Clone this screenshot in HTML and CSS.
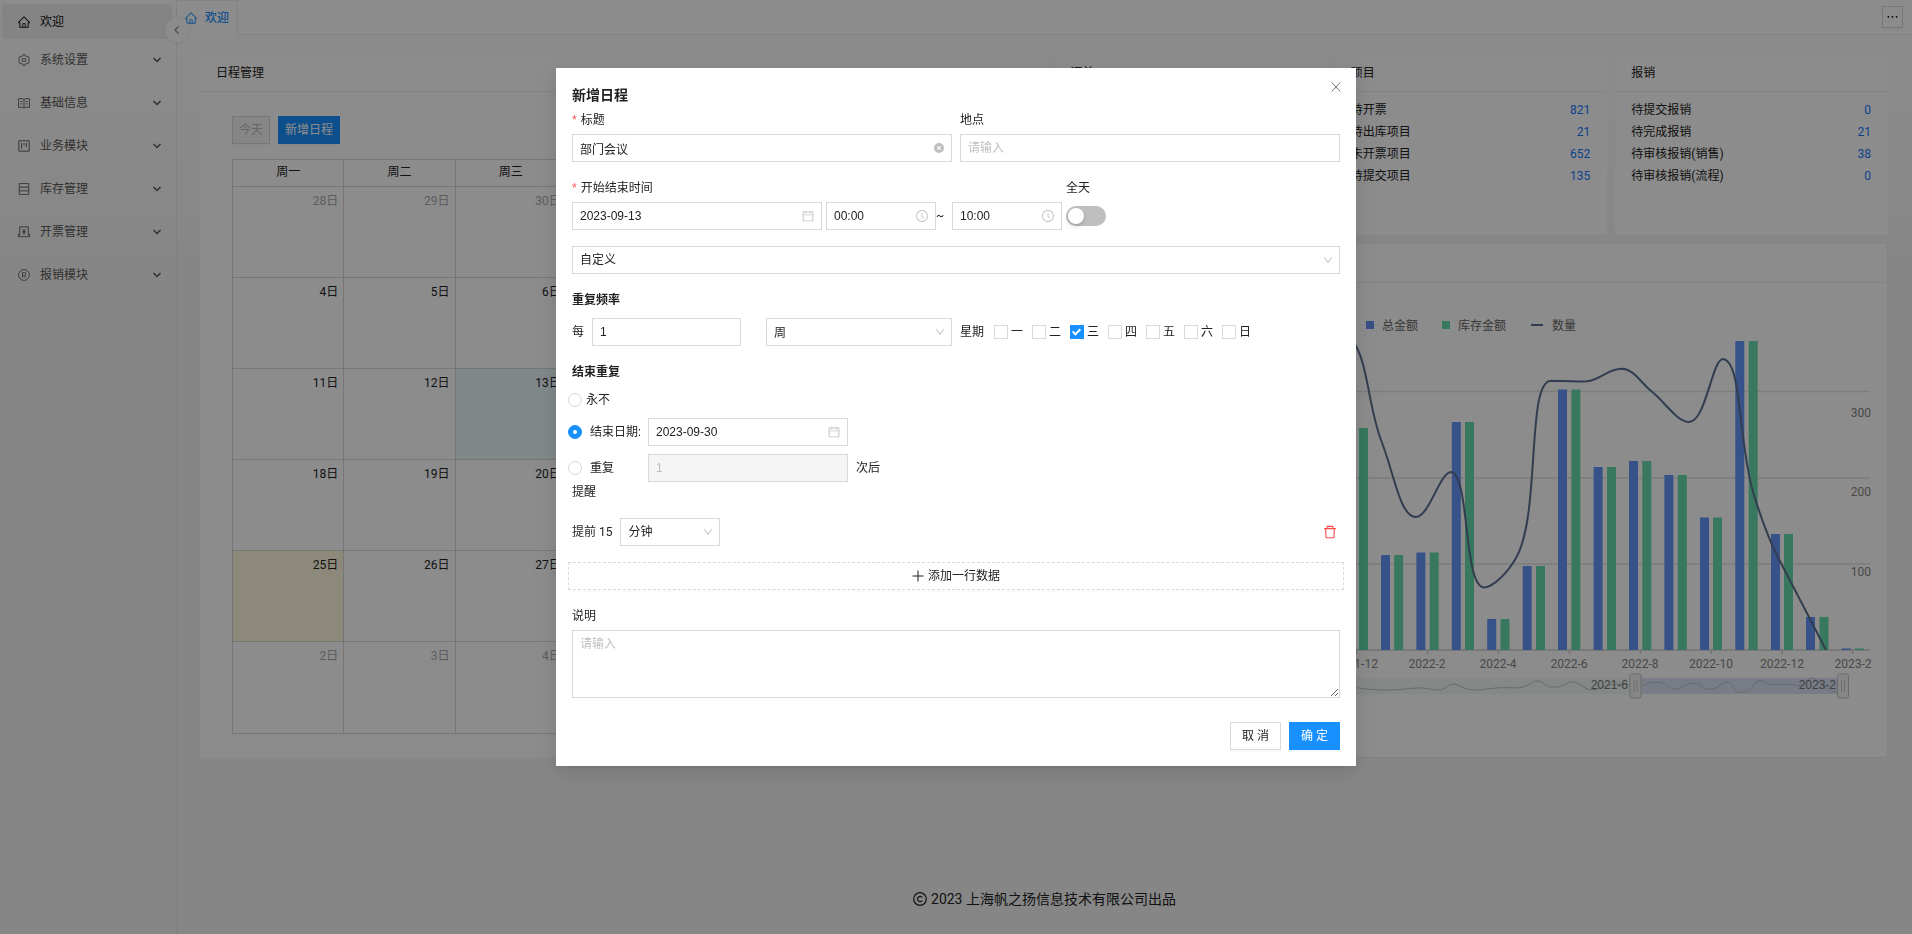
FILE: index.html
```html
<!DOCTYPE html>
<html lang="zh-CN">
<head>
<meta charset="utf-8">
<title>欢迎</title>
<link rel="stylesheet" href="styles.css">
</head>
<body>
<svg class="sprite" aria-hidden="true">
  <symbol id="i-home" viewBox="64 64 896 896"><path fill="currentColor" d="M946.5 505L560.1 118.8l-25.9-25.9a31.5 31.5 0 00-44.4 0L77.5 505a63.9 63.9 0 00-18.8 46c.4 35.2 29.7 63.3 64.9 63.3h42.5V940h691.8V614.3h43.4c17.1 0 33.2-6.7 45.3-18.8a63.6 63.6 0 0018.7-45.3c0-17-6.7-33.1-18.8-45.2zM568 868H456V664h112v204zm217.9-325.7V868H632V640c0-22.1-17.9-40-40-40H432c-22.1 0-40 17.9-40 40v228H238.1V542.3h-96l370-369.7 23.1 23.1L882 542.3h-96.1z"/></symbol>
  <symbol id="i-down" viewBox="64 64 896 896"><path fill="currentColor" d="M884 256h-75c-5.1 0-9.9 2.5-12.9 6.6L512 654.2 227.9 262.6c-3-4.1-7.8-6.6-12.9-6.6h-75c-6.5 0-10.3 7.4-6.5 12.7l352.6 486.1c12.8 17.6 39 17.6 51.7 0l352.6-486.1c3.9-5.3.1-12.7-6.4-12.7z"/></symbol>
  <symbol id="i-cal" viewBox="64 64 896 896"><path fill="currentColor" d="M880 184H712v-64c0-4.4-3.6-8-8-8h-56c-4.4 0-8 3.6-8 8v64H384v-64c0-4.4-3.6-8-8-8h-56c-4.4 0-8 3.6-8 8v64H144c-17.7 0-32 14.3-32 32v664c0 17.7 14.3 32 32 32h736c17.7 0 32-14.3 32-32V216c0-17.7-14.3-32-32-32zm-40 656H184V460h656v380zM184 392V256h128v48c0 4.4 3.6 8 8 8h56c4.4 0 8-3.6 8-8v-48h256v48c0 4.4 3.6 8 8 8h56c4.4 0 8-3.6 8-8v-48h128v136H184z"/></symbol>
  <symbol id="i-clock" viewBox="64 64 896 896"><path fill="currentColor" d="M512 64C264.6 64 64 264.6 64 512s200.6 448 448 448 448-200.6 448-448S759.4 64 512 64zm0 820c-205.4 0-372-166.6-372-372s166.6-372 372-372 372 166.6 372 372-166.6 372-372 372z"/><path fill="currentColor" d="M686.7 638.6L544.1 535.5V288c0-4.4-3.6-8-8-8H488c-4.4 0-8 3.6-8 8v275.4c0 2.6 1.2 5 3.3 6.5l165.4 120.6c3.6 2.6 8.6 1.8 11.2-1.7l28.6-39c2.6-3.7 1.8-8.7-1.8-11.2z"/></symbol>
  <symbol id="i-trash" viewBox="64 64 896 896"><path fill="currentColor" d="M360 184h-8c4.400 0 8-3.600 8-8v8h304v-8c0 4.400 3.600 8 8 8h-8v72h72v-80c0-35.300-28.700-64-64-64H352c-35.300 0-64 28.700-64 64v80h72v-72zm504 72H160c-17.700 0-32 14.300-32 32v32c0 4.400 3.600 8 8 8h60.400l24.700 523c1.600 34.100 29.800 61 63.900 61h454c34.200 0 62.300-26.800 63.900-61l24.700-523H888c4.400 0 8-3.600 8-8v-32c0-17.700-14.300-32-32-32zM731.300 840H292.700l-24.200-512h487l-24.200 512z"/></symbol>
  <symbol id="i-chev" viewBox="0 0 10 10"><path d="M1.500 3l3.500 3.500L8.500 3" fill="none" stroke="currentColor" stroke-width="1.500"/></symbol>
  <symbol id="i-gear" viewBox="0 0 14 14"><path d="M5.400 1h3.200l.5 1.700 1 .6 1.700-.4 1.500 2.700-1.200 1.400 1.200 1.400-1.500 2.700-1.700-.4-1 .6L8.600 13H5.400l-.5-1.700-1-.6-1.700.4L.7 8.400 1.900 7 .7 5.600l1.500-2.700 1.700.4 1-.6z" fill="none" stroke="currentColor"/><circle cx="7" cy="7" r="2" fill="none" stroke="currentColor"/></symbol>
  <symbol id="i-read" viewBox="0 0 14 14"><path d="M.5 2h5L7 3l1.500-1h5v10h-5L7 13l-1.500-1h-5zM7 3v10M2.500 5.300h2.500M2.500 8h2.500M9 5.300h2.500M9 8h2.500" fill="none" stroke="currentColor"/></symbol>
  <symbol id="i-project" viewBox="0 0 14 14"><path d="M1 1h12v12H1zM4.200 3.500v7M7 3.500v3M9.800 3.500v4.500" fill="none" stroke="currentColor" stroke-width="1.100"/></symbol>
  <symbol id="i-db" viewBox="0 0 14 14"><path d="M1.500.5h11v13h-11zM1.500 4.800h11M1.500 9.200h11" fill="none" stroke="currentColor"/></symbol>
  <symbol id="i-money" viewBox="0 0 14 14"><path d="M2 11.500V1h10v10.500M.5 9v3.500h13V9M4.700 3.200L7 6l2.300-2.800M7 6v4M5.200 6.500h3.600M5.200 8.200h3.600" fill="none" stroke="currentColor"/></symbol>
  <symbol id="i-reg" viewBox="0 0 14 14"><circle cx="7" cy="7" r="6.300" fill="none" stroke="currentColor"/><path d="M5.200 10.300V4h2.100a1.700 1.700 0 010 3.500H5.200M7.300 7.500L9 10.300" fill="none" stroke="currentColor"/></symbol>
</svg>

<div class="app">
  <nav class="side">
    <a class="item on" href="#"><svg class="ic"><use href="#i-home"/></svg><span>欢迎</span></a>
    <a class="item" href="#"><svg class="ic"><use href="#i-gear"/></svg><span>系统设置</span><svg class="chev"><use href="#i-chev"/></svg></a>
    <a class="item" href="#"><svg class="ic"><use href="#i-read"/></svg><span>基础信息</span><svg class="chev"><use href="#i-chev"/></svg></a>
    <a class="item" href="#"><svg class="ic"><use href="#i-project"/></svg><span>业务模块</span><svg class="chev"><use href="#i-chev"/></svg></a>
    <a class="item" href="#"><svg class="ic"><use href="#i-db"/></svg><span>库存管理</span><svg class="chev"><use href="#i-chev"/></svg></a>
    <a class="item" href="#"><svg class="ic"><use href="#i-money"/></svg><span>开票管理</span><svg class="chev"><use href="#i-chev"/></svg></a>
    <a class="item" href="#"><svg class="ic"><use href="#i-reg"/></svg><span>报销模块</span><svg class="chev"><use href="#i-chev"/></svg></a>
    <button class="fold" aria-label="收起"><svg viewBox="0 0 10 10"><path d="M6.500 1.500L3 5l3.500 3.500" fill="none" stroke="currentColor" stroke-width="1.300"/></svg></button>
  </nav>

  <div class="page">
    <header class="tabs">
      <a class="tab" href="#"><svg class="ic"><use href="#i-home"/></svg>欢迎</a>
      <div class="tabline"><button class="more" aria-label="更多"><svg viewBox="0 0 12 4"><circle cx="1.500" cy="2" r="1"/><circle cx="6" cy="2" r="1"/><circle cx="10.500" cy="2" r="1"/></svg></button></div>
    </header>

    <main class="board">
      <section class="card">
        <h2>日程管理</h2>
        <div class="cal">
          <div class="calbar"><button class="btn today" disabled>今天</button><button class="btn primary">新增日程</button></div>
          <table>
            <thead><tr><th>周一</th><th>周二</th><th>周三</th><th>周四</th><th>周五</th><th>周六</th><th>周日</th></tr></thead>
            <tbody>
              <tr><td class="off">28日</td><td class="off">29日</td><td class="off">30日</td><td class="off">31日</td><td>1日</td><td>2日</td><td>3日</td></tr>
              <tr><td>4日</td><td>5日</td><td>6日</td><td>7日</td><td>8日</td><td>9日</td><td>10日</td></tr>
              <tr><td>11日</td><td>12日</td><td class="sel">13日</td><td>14日</td><td>15日</td><td>16日</td><td>17日</td></tr>
              <tr><td>18日</td><td>19日</td><td>20日</td><td>21日</td><td>22日</td><td>23日</td><td>24日</td></tr>
              <tr><td class="now">25日</td><td>26日</td><td>27日</td><td>28日</td><td>29日</td><td>30日</td><td class="off">1日</td></tr>
              <tr><td class="off">2日</td><td class="off">3日</td><td class="off">4日</td><td class="off">5日</td><td class="off">6日</td><td class="off">7日</td><td class="off">8日</td></tr>
            </tbody>
          </table>
        </div>
      </section>

      <div class="right">
        <div class="stats">
          <section class="card"><h2>订单</h2></section>
          <section class="card"><h2>项目</h2>
            <dl><div><dt>待开票</dt><dd>821</dd></div><div><dt>待出库项目</dt><dd>21</dd></div><div><dt>未开票项目</dt><dd>652</dd></div><div><dt>待提交项目</dt><dd>135</dd></div></dl>
          </section>
          <section class="card"><h2>报销</h2>
            <dl><div><dt>待提交报销</dt><dd>0</dd></div><div><dt>待完成报销</dt><dd>21</dd></div><div><dt>待审核报销(销售)</dt><dd>38</dd></div><div><dt>待审核报销(流程)</dt><dd>0</dd></div></dl>
          </section>
        </div>
        <section class="card chart">
          <div class="charthead"></div>
          <svg class="plot" viewBox="1054 283 834 474" role="img" aria-label="总金额 库存金额 数量">
            <g class="legend"><rect class="b" x="1366" y="321" width="8" height="8"/><text x="1382" y="330">总金额</text><rect class="g" x="1442" y="321" width="8" height="8"/><text x="1458" y="330">库存金额</text><path class="ln" d="M1531 325h12"/><text x="1552" y="330">数量</text></g>
            <path class="grid" d="M1110 391.500H1870M1110 478H1870M1110 564H1870"/>
            <path class="axis" d="M1110 650H1870M1356.500 650v4M1427.500 650v4M1498.500 650v4M1569.500 650v4M1640.500 650v4M1711 650v4M1782 650v4M1852.500 650v4"/>
            <g class="b"><rect x="1346" y="428" width="9" height="222"/><rect x="1381" y="555" width="9" height="95"/><rect x="1416.400" y="552.500" width="9" height="97.500"/><rect x="1451.800" y="422" width="9" height="228"/><rect x="1487.200" y="619" width="9" height="31"/><rect x="1522.700" y="566" width="9" height="84"/><rect x="1558" y="389.500" width="9" height="260.500"/><rect x="1593.600" y="467" width="9" height="183"/><rect x="1629" y="461" width="9" height="189"/><rect x="1664.400" y="475" width="9" height="175"/><rect x="1700" y="517.500" width="9" height="132.500"/><rect x="1735.300" y="341" width="9" height="309"/><rect x="1771" y="534" width="9" height="116"/><rect x="1806" y="617" width="9" height="33"/><rect x="1841.700" y="648.500" width="9" height="1.500"/></g>
            <g class="g"><rect x="1359" y="428" width="9" height="222"/><rect x="1394.200" y="555" width="9" height="95"/><rect x="1429.700" y="552.500" width="9" height="97.500"/><rect x="1465" y="422" width="9" height="228"/><rect x="1500.500" y="619" width="9" height="31"/><rect x="1536" y="566" width="9" height="84"/><rect x="1571.400" y="389.500" width="9" height="260.500"/><rect x="1607" y="467" width="9" height="183"/><rect x="1642.300" y="461" width="9" height="189"/><rect x="1677.800" y="475" width="9" height="175"/><rect x="1713" y="517.500" width="9" height="132.500"/><rect x="1748.700" y="341" width="9" height="309"/><rect x="1784" y="534" width="9" height="116"/><rect x="1819.500" y="617" width="9" height="33"/><rect x="1855" y="648.500" width="9" height="1.500"/></g>
            <path class="ln" d="M1340 335C1347 335 1352 338 1356 346C1368 368 1369 408 1381 440C1395 476 1400 517 1416 517C1429 517 1440 472 1451 472C1470 474 1463 586 1484 587.500C1494 587 1508 572 1516 558C1541 515 1526 381 1551 380.700C1563 381 1575 382 1587 381.300C1600 380 1608 368.700 1621.700 368.700C1634 369 1640 382 1652 391.700C1664 401 1677 422 1689 422C1706 422 1712 359 1723 359C1742 361 1738 440 1753 491.700C1762 522 1770 543 1782 565L1826 650"/>
            <g class="tick"><text x="1356" y="668">2021-12</text><text x="1427" y="668">2022-2</text><text x="1498" y="668">2022-4</text><text x="1569" y="668">2022-6</text><text x="1640" y="668">2022-8</text><text x="1711" y="668">2022-10</text><text x="1782" y="668">2022-12</text><text x="1853" y="668">2023-2</text></g>
            <g class="ytick"><text x="1871" y="417">300</text><text x="1871" y="496">200</text><text x="1871" y="576">100</text></g>
            <rect class="track" x="1110" y="678" width="733" height="16"/>
            <rect class="range" x="1635" y="678" width="208" height="16"/>
            <path class="wave" d="M1340 686C1360 688 1370 690 1385 690S1410 688 1420 688 1430 690 1440 690C1446 689 1448 684 1453 684S1465 690 1474 690 1490 688 1506 687.500C1530 690 1530 681 1537 681S1545 687 1552 687 1562 687 1569 682C1582 681 1583 690 1591 690S1608 684 1618 684 1630 686 1644 685C1652 682 1650 682 1659 682.500S1668 689 1675 689 1685 683 1695 683 1698 689 1707 689C1720 690 1720 682 1727 682S1734 693 1740 692.500C1755 692 1753 680 1760 680.500S1765 685 1775 684.500 1790 684 1800 686C1806 687 1806 678 1812 678S1820 690 1840 693"/>
            <g class="handle"><rect x="1630" y="674" width="11" height="24" rx="2"/><path d="M1634 680v12M1637 680v12"/><rect x="1837.500" y="674" width="11" height="24" rx="2"/><path d="M1841.500 680v12M1844.500 680v12"/></g>
            <g class="ends"><text x="1628" y="689">2021-6</text><text x="1836" y="689">2023-2</text></g>
          </svg>
        </section>
      </div>
    </main>
    <footer class="foot"><svg viewBox="0 0 14 14"><circle cx="7" cy="7" r="6.300" fill="none" stroke="currentColor" stroke-width="1.200"/><path d="M9.300 5.500A2.600 2.600 0 109.300 8.500" fill="none" stroke="currentColor" stroke-width="1.200"/></svg>2023 上海帆之扬信息技术有限公司出品</footer>
  </div>
</div>

<div class="mask">
  <form class="modal" role="dialog" aria-labelledby="mt">
    <button type="button" class="close" aria-label="关闭"><svg viewBox="0 0 10 10"><path d="M.6.300l8.800 9.400M9.400.300L.6 9.700" stroke="currentColor" fill="none"/></svg></button>
    <h1 id="mt">新增日程</h1>
    <div class="row two">
      <div><label class="lab req" for="f1">标题</label><div class="box"><input id="f1" value="部门会议"><svg class="clear" viewBox="0 0 10 10"><circle cx="5" cy="5" r="5" fill="#bfbfbf"/><path d="M3.300 3.300l3.400 3.400M6.700 3.300L3.300 6.700" stroke="#fff" stroke-width="1.200"/></svg></div></div>
      <div><label class="lab" for="f2">地点</label><div class="box"><input id="f2" placeholder="请输入"></div></div>
    </div>
    <div class="row time">
      <div><label class="lab req" for="f3">开始结束时间</label>
        <div class="inline"><div class="box date"><input id="f3" value="2023-09-13"><svg class="ico"><use href="#i-cal"/></svg></div><div class="box clock"><input aria-label="开始时间" value="00:00"><svg class="ico"><use href="#i-clock"/></svg></div></div></div>
      <span class="tilde">~</span>
      <div class="box clock"><input aria-label="结束时间" value="10:00"><svg class="ico"><use href="#i-clock"/></svg></div>
      <div class="all"><label class="lab" for="sw">全天</label><div class="swline"><button type="button" id="sw" class="switch" role="switch" aria-checked="false"></button></div></div>
    </div>
    <div class="row s16"><div class="box"><select aria-label="重复"><option>自定义</option></select><svg class="arrow"><use href="#i-down"/></svg></div></div>

    <h3>重复频率</h3>
    <div class="freq">
      <div class="every"><label for="f4">每</label><div class="box"><input id="f4" value="1"></div></div>
      <div class="unit"><div class="box"><select aria-label="单位"><option>周</option></select><svg class="arrow"><use href="#i-down"/></svg></div></div>
      <div class="week"><span>星期</span><div class="days">
        <label><input type="checkbox">一</label><label><input type="checkbox">二</label><label><input type="checkbox" checked>三</label><label><input type="checkbox">四</label><label><input type="checkbox">五</label><label><input type="checkbox">六</label><label><input type="checkbox">日</label></div></div>
    </div>

    <h3>结束重复</h3>
    <div class="ends-list">
      <label class="never"><input type="radio" name="end">永不</label>
      <div class="end"><label><input type="radio" name="end" checked>结束日期:</label><div class="box"><input aria-label="结束日期" value="2023-09-30"><svg class="ico"><use href="#i-cal"/></svg></div></div>
      <div class="end"><label><input type="radio" name="end">重复</label><div class="box dis"><input aria-label="次数" value="1" disabled></div><span>次后</span></div>
    </div>
    <div class="remind">提醒</div>
    <div class="row ahead"><span>提前 15</span><div class="box"><select aria-label="时间单位"><option>分钟</option></select><svg class="arrow"><use href="#i-down"/></svg></div><button type="button" class="del" aria-label="删除"><svg><use href="#i-trash"/></svg></button></div>
    <button type="button" class="add"><svg viewBox="0 0 12 12"><path d="M6 .5v11M.5 6h11" stroke="currentColor"/></svg>添加一行数据</button>
    <div class="row note"><label class="lab" for="f5">说明</label><textarea id="f5" placeholder="请输入"></textarea></div>
    <div class="row acts"><button type="button" class="btn">取 消</button><button type="button" class="btn primary">确 定</button></div>
  </form>
</div>
</body>
</html>
```

FILE: styles.css
```css
* { box-sizing: border-box; }
body { margin: 0; min-height: 100vh; font: 12px/20px Roboto, "Noto Sans CJK SC", sans-serif; color: #222; overflow: hidden; }
a { color: inherit; text-decoration: none; }
h1, h2, h3, dl, dd { margin: 0; }
button, input, select, textarea { font: inherit; color: inherit; }
svg { display: block; flex: none; }
.sprite { position: absolute; width: 0; height: 0; }

.app { display: flex; min-height: 100vh; background: linear-gradient(#fff, #f5f5f5 28%); }
.side { position: relative; flex: none; width: 177px; padding: 4px; padding-left: 2px; border-right: 1px solid #ececec; display: flex; flex-direction: column; gap: 8px; }
.item { display: flex; align-items: center; height: 35px; padding: 0 10px 0 16px; gap: 10px; color: #595959; }
.item span { flex: 1; }
.item.on { background: #f0f0f0; border-radius: 4px; color: #111; margin-bottom: -5px; }
.ic { width: 12px; height: 12px; }
.chev { width: 10px; height: 10px; }
.fold { position: absolute; right: -13px; top: 18px; width: 24px; height: 24px; padding: 7px; border: 0; border-radius: 50%; background: #fff; color: #8c8c8c; box-shadow: 0 1px 4px #0001; }

.page { flex: 1; min-width: 0; display: flex; flex-direction: column; }
.tabs { display: flex; height: 35px; background: #fff; }
.tab { display: flex; align-items: center; gap: 8px; padding: 0 8px; border: 1px solid #eee; border-left: 0; border-bottom: 0; color: #1890ff; font-weight: 500; }
.tabline { flex: 1; display: flex; align-items: center; justify-content: flex-end; padding-right: 9px; border-bottom: 1px solid #eee; }
.more { width: 21px; height: 22px; padding: 4px; border: 1px solid #d9d9d9; background: #fff; box-shadow: 0 2px 0 #00000008; }

.board { display: grid; grid-template-columns: 844fr 834fr; gap: 10px; padding: 19px 24px 0 23px; }
.card { background: #fff; border-radius: 2px; }
.card h2 { height: 38px; padding: 0 16px; border-bottom: 1px solid #f0f0f0; font-size: 12px; font-weight: 400; line-height: 38px; }
.right { display: flex; flex-direction: column; gap: 8px; min-width: 0; }
.stats { display: grid; grid-template-columns: repeat(3, 1fr); gap: 8px; min-height: 181px; }
dl { padding: 7px 17px 7px 16px; line-height: 22px; }
dl div { display: flex; justify-content: space-between; }
dd { color: #1677ff; }
.cal { padding: 24px 32px; }
.calbar { display: flex; gap: 8px; margin-bottom: 15px; }
.btn { height: 28px; padding: 0 10px; border: 1px solid #d9d9d9; border-radius: 0; background: #fff; box-shadow: 0 2px 0 #00000005; }
.btn.primary { padding: 0 7px; border: 0; background: #1890ff; color: #fff; box-shadow: 0 2px 0 #1890ff0d; }
.btn.today { padding: 0 6px; background: #f5f5f5; color: #bbb; }
table { width: 100%; table-layout: fixed; border-collapse: collapse; }
th, td { border: 1px solid #d8d8d8; padding: 0; }
th { height: 27px; line-height: 20px; padding-bottom: 2px; font-weight: 400; }
td { height: 91px; padding: 4px 5px 0 0; text-align: right; vertical-align: top; }
tr:last-child td { height: 92px; }
.off { color: #aaa; }
.sel { background: #ebf8fb; }
.now { background: #fffadf; }

.chart { flex: 1; box-shadow: inset 0 0 0 1px #efefef; }
.charthead { height: 40px; border-bottom: 1px solid #eee; }
.plot { width: 100%; height: auto; }
.plot text { font-size: 12px; fill: #858585; }
.plot .legend text { fill: #666; }
.plot .b { fill: #6494fa; }
.plot .g { fill: #64dbab; }
.plot .ln { fill: none; stroke: #5d7092; stroke-width: 2; }
.plot .grid { stroke: #e3e3e3; stroke-width: 1.5; }
.plot .axis { stroke: #d2d2d2; stroke-width: 1.5; fill: none; }
.plot .tick text { text-anchor: middle; }
.plot .ytick text, .plot .ends text { text-anchor: end; }
.plot .ends text { font-family: "Liberation Sans", sans-serif; fill: #777; }
.plot .track { fill: #f1f7f6; }
.plot .range { fill: #d9e2f5; }
.plot .wave { fill: none; stroke: #bcc2cc; }
.plot .handle { fill: #f5f5f5; stroke: #c4c4c4; }

.foot { display: flex; align-items: center; justify-content: center; gap: 4px; margin-top: auto; padding: 0 0 24px; font-size: 14px; line-height: 22px; }
.foot svg { width: 14px; height: 14px; }

.mask { position: fixed; inset: 0; display: flex; align-items: flex-start; justify-content: center; padding-top: 68px; background: rgba(0, 0, 0, .45); overflow: auto; }
.modal { position: relative; width: 800px; max-width: 100%; padding: 16px 12px; background: #fff; box-shadow: 0 3px 6px -4px #0000001f, 0 6px 16px #00000014, 0 9px 28px 8px #0000000d; }
.close { position: absolute; top: 14px; right: 15px; width: 10px; height: 10px; padding: 0; border: 0; background: none; color: #777; }
.modal h1 { padding: 0 4px; font-size: 14px; line-height: 22px; font-weight: 700; }
.modal h3 { margin-top: 12px; padding: 0 4px; font-size: 12px; line-height: 28px; font-weight: 700; }
.row { padding: 0 4px; }
.two { display: grid; grid-template-columns: 1fr 1fr; gap: 8px; }
.lab { display: block; line-height: 28px; }
.req::before { content: "*"; margin-right: 4px; color: #ff4d4f; font-family: "Liberation Sans", sans-serif; }
.box { position: relative; display: flex; align-items: center; height: 28px; border: 1px solid #d9d9d9; background: #fff; }
.box input, .box select { flex: 1; width: 100%; min-width: 0; height: 26px; padding: 0 7px; border: 0; outline: 0; background: none; appearance: none; font-family: "Liberation Sans", "Noto Sans CJK SC", sans-serif; }
.box select { padding: 0 24px 0 7px; }
::placeholder { color: #bfbfbf; opacity: 1; }
.clear { width: 10px; height: 10px; margin-right: 7px; }
.ico { width: 12px; height: 12px; margin-right: 7px; color: #c4c4c4; }
.arrow { position: absolute; right: 6px; top: 8px; width: 10px; height: 10px; color: #bfbfbf; pointer-events: none; }
.time { display: flex; align-items: flex-end; margin-top: 12px; }
.inline { display: flex; gap: 4px; }
.date { width: 250px; }
.clock { width: 110px; }
.tilde { width: 16px; line-height: 28px; }
.all { margin-left: 4px; }
.swline { display: flex; align-items: center; height: 28px; }
.switch { width: 40px; height: 20px; padding: 2px; border: 0; border-radius: 10px; background: #bfbfbf; }
.switch::before { content: ""; display: block; width: 16px; height: 16px; border-radius: 50%; background: #fff; box-shadow: 0 2px 4px #00230b33; }
.s16 { margin-top: 16px; }

.freq { display: grid; grid-template-columns: 1fr 1fr 2fr; margin-top: 4px; line-height: 28px; }
.freq > div { padding: 0 4px; }
.every { display: flex; gap: 8px; }
.every .box { width: 149px; }
.week, .days { display: flex; }
.week { gap: 10px; }
.days { gap: 9px; }
.days label { display: flex; align-items: center; gap: 3px; }
input[type=checkbox], input[type=radio] { appearance: none; position: relative; flex: none; width: 14px; height: 14px; margin: 0; border: 1px solid #d9d9d9; background: #fff; }
input[type=radio] { border-radius: 50%; }
input:checked { background: #1890ff; border-color: #1890ff; }
input[type=checkbox]:checked::after { content: ""; position: absolute; left: 3px; top: 1px; box-sizing: border-box; width: 5px; height: 8px; border: solid #fff; border-width: 0 2px 2px 0; transform: rotate(45deg); }
input[type=radio]:checked::after { content: ""; position: absolute; inset: 4px; border-radius: 50%; background: #fff; }
.never { display: flex; align-items: center; gap: 4px; height: 28px; margin-bottom: 4px; }
.end { display: flex; align-items: center; }
.end + .end { margin-top: 8px; }
.end label { display: flex; align-items: center; gap: 8px; width: 80px; }
.end .box { width: 200px; }
.end span { margin-left: 8px; }
.dis { background: #f5f5f5; color: #bfbfbf; }
.remind { padding: 0 4px; }
.ahead { display: flex; align-items: center; gap: 8px; margin-top: 16px; }
.ahead .box { width: 100px; }
.del { margin-left: auto; margin-right: 3px; padding: 0; border: 0; background: none; color: #ff4d4f; }
.del svg { width: 14px; height: 14px; }
.add { display: flex; align-items: center; justify-content: center; gap: 4px; width: 100%; height: 28px; margin-top: 16px; border: 1px dashed #d9d9d9; background: #fff; box-shadow: 0 2px 0 #00000004; }
.add svg { width: 12px; height: 12px; }
.note { margin-top: 12px; }
textarea { display: block; width: 100%; height: 68px; padding: 3px 7px; border: 1px solid #d9d9d9; outline: 0; resize: vertical; }
.acts { display: flex; justify-content: flex-end; gap: 8px; margin-top: 24px; }
.acts .btn { width: 51px; padding: 0; }
```
